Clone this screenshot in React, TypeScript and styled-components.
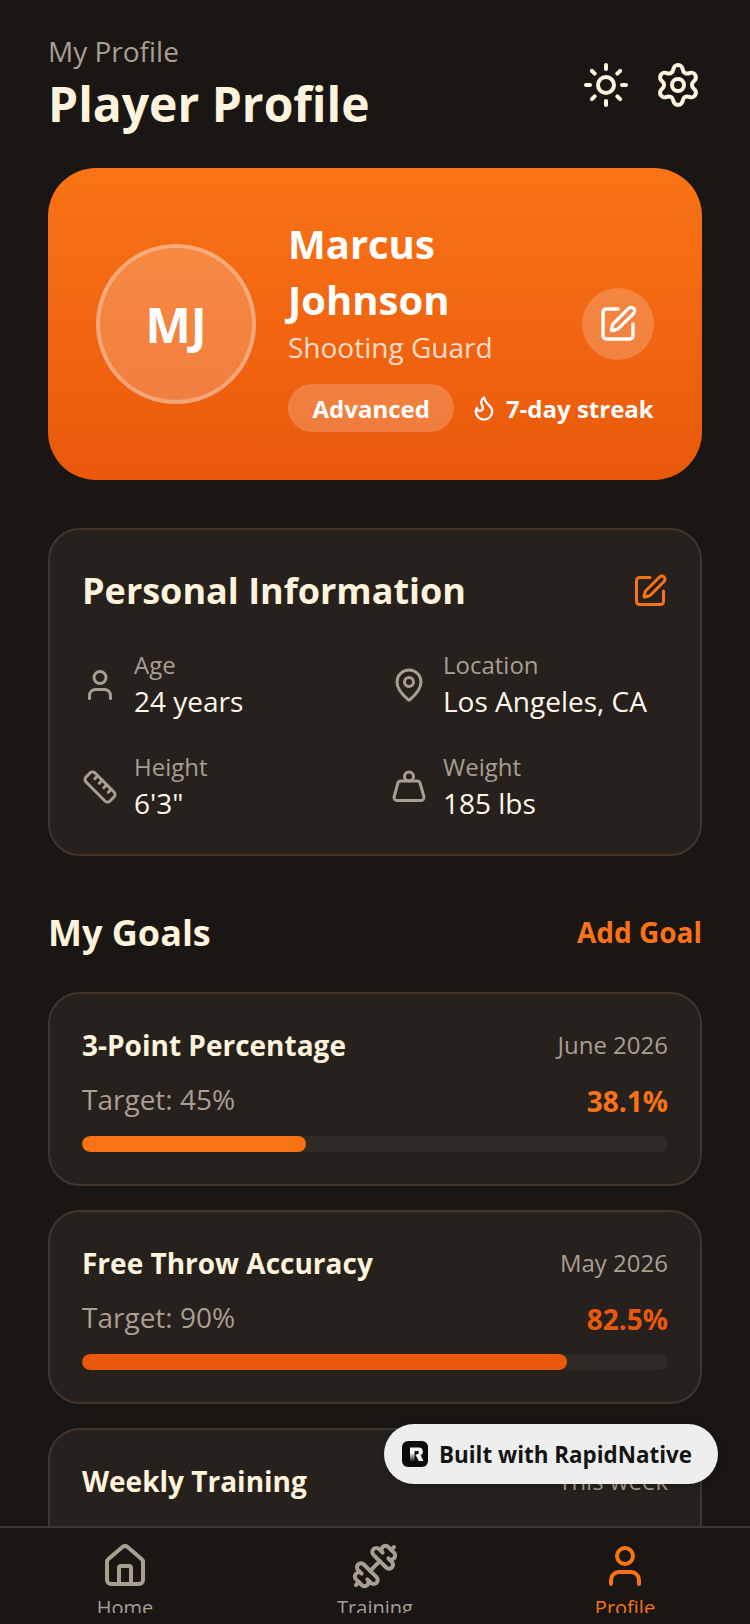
import React from "react";
import styled, { createGlobalStyle } from "styled-components";
import { Sun, Settings, SquarePen, Flame, User, MapPin, Ruler, Weight, House, Dumbbell } from "lucide-react";

const Global = createGlobalStyle`
  html, body { margin: 0; padding: 0; background: #1a1614; }
  * { box-sizing: border-box; }
`;

const cream = "#fef3dc";
const muted = "#a89f91";

const Screen = styled.div`
  position: relative;
  width: 750px;
  height: 1624px;
  overflow: hidden;
  display: flex;
  flex-direction: column;
  background: #1a1614;
  font-family: "Open Sans", "Noto Sans", sans-serif;
  color: ${cream};
`;
const Scroll = styled.main`
  flex: 1;
  min-height: 0;
  overflow: hidden;
  padding: 32px 48px 0;
`;
const Header = styled.header`
  display: flex;
  justify-content: space-between;
  align-items: center;
  margin-bottom: 30px;
`;
const Eyebrow = styled.div`
  font-size: 28px;
  line-height: 38px;
  color: ${muted};
`;
const Title = styled.h1`
  margin: 0;
  font-size: 48px;
  line-height: 68px;
  font-weight: 700;
  color: ${cream};
`;
const HeaderIcons = styled.div`
  display: flex;
  gap: 24px;
  align-items: center;
  color: ${cream};
`;
const Hero = styled.section`
  height: 312px;
  border-radius: 48px;
  background: linear-gradient(180deg, #f97316 0%, #ea580c 100%);
  padding: 0 48px;
  display: flex;
  align-items: center;
  margin-bottom: 48px;
`;
const Avatar = styled.div`
  width: 160px;
  height: 160px;
  flex: none;
  border-radius: 50%;
  border: 4px solid rgba(255, 255, 255, 0.3);
  background: rgba(255, 255, 255, 0.2);
  display: flex;
  align-items: center;
  justify-content: center;
  font-size: 48px;
  font-weight: 700;
  color: #fff;
`;
const HeroBody = styled.div`
  flex: 1;
  min-width: 0;
  margin-left: 32px;
  display: grid;
  grid-template-columns: 1fr auto;
  grid-template-rows: auto auto;
`;
const HeroText = styled.div`
  grid-column: 1;
  grid-row: 1;
`;
const Name = styled.div`
  font-size: 40px;
  line-height: 56px;
  font-weight: 700;
  color: #fff;
`;
const Role = styled.div`
  font-size: 28px;
  line-height: 38px;
  color: rgba(255, 255, 255, 0.8);
`;
const EditCircle = styled.div`
  grid-column: 2;
  grid-row: 1 / 3;
  align-self: center;
  width: 72px;
  height: 72px;
  border-radius: 50%;
  background: rgba(255, 255, 255, 0.2);
  display: flex;
  align-items: center;
  justify-content: center;
  color: #fff;
`;
const HeroMeta = styled.div`
  grid-column: 1 / 3;
  grid-row: 2;
  display: flex;
  align-items: center;
  margin-top: 18px;
  gap: 16px;
`;
const Level = styled.span`
  height: 48px;
  border-radius: 24px;
  padding: 0 24px 0 24.5px;
  display: flex;
  align-items: center;
  background: rgba(255, 255, 255, 0.2);
  color: #fff;
  font-size: 24px;
  font-weight: 700;
`;
const Streak = styled.span`
  display: flex;
  align-items: center;
  gap: 8px;
  color: #fff;
  font-size: 24px;
  font-weight: 700;
`;
const Card = styled.section`
  background: #26211d;
  border: 2px solid #44352a;
  border-radius: 32px;
  padding: 32px 32px 31px;
  margin-bottom: 49px;
`;
const GoalCard = styled(Card)`
  padding: 31px 32px 32px;
  margin-bottom: 24px;
`;
const InfoHead = styled.div`
  display: flex;
  justify-content: space-between;
  align-items: center;
  color: #f97316;
  margin-bottom: 29px;
`;
const CardTitle = styled.h2`
  margin: 0;
  font-size: 36px;
  line-height: 58px;
  font-weight: 700;
  color: ${cream};
`;
const InfoGrid = styled.div`
  display: grid;
  grid-template-columns: 309px 1fr;
  row-gap: 30px;
`;
const InfoItem = styled.div`
  display: flex;
  align-items: center;
  gap: 16px;
  color: ${muted};
`;
const IconSlot = styled.div`
  width: 36px;
  display: flex;
  justify-content: center;
  flex: none;
`;
const InfoLabel = styled.div`
  font-size: 24px;
  line-height: 32px;
  color: ${muted};
`;
const InfoValue = styled.div`
  font-size: 28px;
  line-height: 40px;
  color: #fff7e8;
`;
const GoalsHead = styled.div`
  display: flex;
  justify-content: space-between;
  align-items: center;
  margin-bottom: 31px;
`;
const SectionTitle = styled.h2`
  margin: 0;
  font-size: 36px;
  line-height: 56px;
  font-weight: 700;
  color: ${cream};
`;
const AddGoal = styled.span`
  font-size: 28px;
  line-height: 38px;
  margin-bottom: 2px;
  font-weight: 700;
  color: #f97316;
`;
const GoalTop = styled.div`
  display: flex;
  justify-content: space-between;
  align-items: center;
  margin-bottom: 14px;
`;
const GoalMid = styled.div`
  display: flex;
  justify-content: space-between;
  align-items: flex-start;
`;
const GoalName = styled.div`
  font-size: 28px;
  line-height: 40px;
  font-weight: 700;
  color: ${cream};
`;
const GoalDate = styled.div`
  font-size: 24px;
  line-height: 32px;
  color: ${muted};
`;
const Target = styled.div`
  font-size: 28px;
  line-height: 40px;
  color: ${muted};
`;
const GoalValue = styled.div<{ $color: string }>`
  font-size: 28px;
  line-height: 44px;
  font-weight: 700;
  color: ${(p) => p.$color};
`;
const Track = styled.div`
  height: 16px;
  border-radius: 8px;
  background: #2f2a26;
  overflow: hidden;
  margin-top: 13px;
`;
const Fill = styled.div<{ $color: string }>`
  height: 100%;
  border-radius: 8px;
  background: ${(p) => p.$color};
`;
const Nav = styled.nav`
  flex: none;
  height: 98px;
  border-top: 2px solid #3d3833;
  background: #1a1614;
  display: grid;
  grid-template-columns: repeat(3, 1fr);
`;
const NavItem = styled.div<{ $active?: boolean }>`
  height: 85px;
  overflow: hidden;
  display: flex;
  flex-direction: column;
  align-items: center;
  padding-top: 14px;
  color: ${(p) => (p.$active ? "#f97316" : muted)};
  svg { flex: none; }
`;
const NavLabel = styled.div`
  margin-top: 4px;
  font-size: 20px;
  line-height: 28px;
`;
const Badge = styled.div`
  position: absolute;
  left: 384px;
  top: 1424px;
  width: 334px;
  height: 60px;
  border-radius: 30px;
  background: #eeeeee;
  box-shadow: 0 2px 8px rgba(0, 0, 0, 0.25);
  display: flex;
  align-items: center;
  gap: 11px;
  padding: 0 18px;
  color: #141414;
  font-size: 22.4px;
  font-weight: 700;
`;

const Logo = () => (
  <svg width="26" height="26" viewBox="0 0 26 26">
    <defs>
      <linearGradient id="rn" x1="0" y1="0" x2="0" y2="1">
        <stop offset="0.2" stopColor="#f6f6f6" />
        <stop offset="1" stopColor="#222222" />
      </linearGradient>
    </defs>
    <rect width="26" height="26" rx="6" fill="#0c0c0c" />
    <path d="M8 6.5h9a4 4 0 0 1 1.6 7.6L21.5 20h-4.6l-3.4-6 2.6-1.2a1.5 1.5 0 0 0-.6-2.8H8z" fill="#f6f6f6" />
    <path d="M8 10h4.6v10H8z" fill="url(#rn)" />
  </svg>
);

const goals = [
  { name: "3-Point Percentage", date: "June 2026", target: "Target: 45%", value: "38.1%", pct: 38.3, color: "#f97316" },
  { name: "Free Throw Accuracy", date: "May 2026", target: "Target: 90%", value: "82.5%", pct: 82.7, color: "#ea580c" },
  { name: "Weekly Training", date: "This week", target: "Target: 5 sessions", value: "4", pct: 80, color: "#f97316" },
];

const info = [
  { Icon: User, label: "Age", value: "24 years" },
  { Icon: MapPin, label: "Location", value: "Los Angeles, CA" },
  { Icon: Ruler, label: "Height", value: `6'3"` },
  { Icon: Weight, label: "Weight", value: "185 lbs" },
];

export default function App() {
  return (
    <Screen>
      <Global />
      <Scroll>
        <Header>
          <div>
            <Eyebrow>My Profile</Eyebrow>
            <Title>Player Profile</Title>
          </div>
          <HeaderIcons>
            <Sun size={48} strokeWidth={2} />
            <Settings size={48} strokeWidth={2} />
          </HeaderIcons>
        </Header>
        <Hero>
          <Avatar>MJ</Avatar>
          <HeroBody>
            <HeroText>
              <Name>Marcus<br />Johnson</Name>
              <Role>Shooting Guard</Role>
            </HeroText>
            <EditCircle><SquarePen size={40} strokeWidth={2} /></EditCircle>
            <HeroMeta>
              <Level>Advanced</Level>
              <Streak><Flame size={28} strokeWidth={2} />7-day streak</Streak>
            </HeroMeta>
          </HeroBody>
        </Hero>
        <Card>
          <InfoHead>
            <CardTitle>Personal Information</CardTitle>
            <SquarePen size={36} strokeWidth={2} />
          </InfoHead>
          <InfoGrid>
            {info.map(({ Icon, label, value }) => (
              <InfoItem key={label}>
                <IconSlot><Icon size={36} strokeWidth={2} /></IconSlot>
                <div>
                  <InfoLabel>{label}</InfoLabel>
                  <InfoValue>{value}</InfoValue>
                </div>
              </InfoItem>
            ))}
          </InfoGrid>
        </Card>
        <GoalsHead>
          <SectionTitle>My Goals</SectionTitle>
          <AddGoal>Add Goal</AddGoal>
        </GoalsHead>
        {goals.map((g) => (
          <GoalCard key={g.name}>
            <GoalTop>
              <GoalName>{g.name}</GoalName>
              <GoalDate>{g.date}</GoalDate>
            </GoalTop>
            <GoalMid>
              <Target>{g.target}</Target>
              <GoalValue $color={g.color}>{g.value}</GoalValue>
            </GoalMid>
            <Track><Fill $color={g.color} style={{ width: `${g.pct}%` }} /></Track>
          </GoalCard>
        ))}
      </Scroll>
      <Nav>
        <NavItem><House size={48} strokeWidth={2} /><NavLabel>Home</NavLabel></NavItem>
        <NavItem><Dumbbell size={48} strokeWidth={2} /><NavLabel>Training</NavLabel></NavItem>
        <NavItem $active><User size={48} strokeWidth={2} /><NavLabel>Profile</NavLabel></NavItem>
      </Nav>
      <Badge><Logo />Built with RapidNative</Badge>
    </Screen>
  );
}
